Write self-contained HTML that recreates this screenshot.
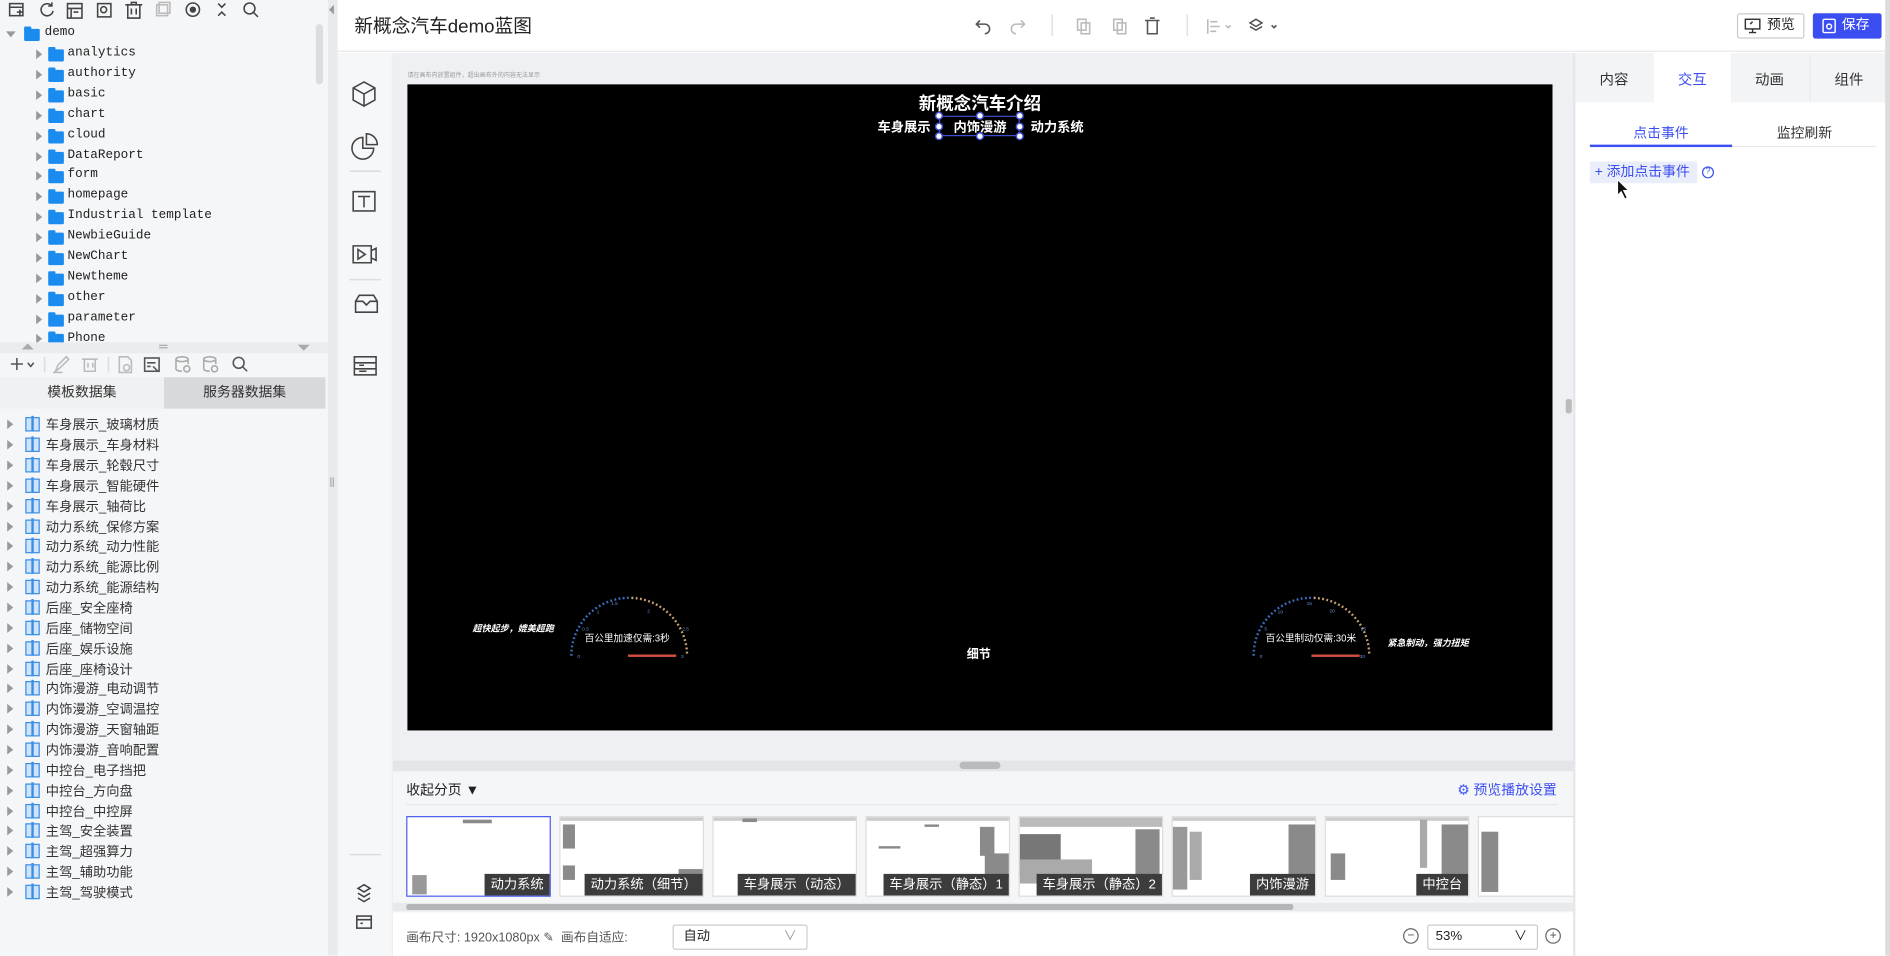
<!DOCTYPE html>
<html><head><meta charset="utf-8"><style>
*{margin:0;padding:0;box-sizing:border-box}
html,body{width:1890px;height:956px;overflow:hidden;background:#fff}
#w{position:absolute;left:0;top:0;width:1568px;height:793px;overflow:hidden;transform:scale(1.20536);transform-origin:0 0;font-family:"Liberation Sans","Noto Sans CJK SC",sans-serif;color:#333}
.a{position:absolute}
.tr{position:absolute;font-family:"Liberation Mono","Noto Sans CJK SC",monospace;font-size:10.5px;color:#222;white-space:nowrap}
.fold{position:absolute;width:13px;height:10px;background:#1a8cf0;border-radius:1px}
.fold:before{content:"";position:absolute;left:0;top:-2px;width:6px;height:3px;background:#1a8cf0;border-radius:1px 1px 0 0}
.tri{position:absolute;width:0;height:0;border-top:4px solid transparent;border-bottom:4px solid transparent;border-left:5px solid #999}
.li{position:absolute;font-size:11px;color:#333;white-space:nowrap}
.ds{position:absolute;width:12px;height:12px;border:1.5px solid #3a8ee6;background:#cfe3fa}
.ds:after{content:"";position:absolute;left:3.5px;top:-2px;width:2px;height:13px;background:#3a8ee6}
.th{position:absolute;top:0;width:120px;height:67px;background:#fff;border:1px solid #ddd;overflow:hidden}
.th .lb{position:absolute;right:0;bottom:0;height:18px;background:#3c3c3c;color:#fff;font-size:11px;line-height:18px;padding:0 5px;white-space:nowrap}
.g{position:absolute;background:#8a8a8a}
</style></head><body><div id="w">

<div class="a" style="left:0;top:0;width:272px;height:793px;background:#f5f6f8"></div>
<div class="a" style="left:272px;top:0;width:8px;height:793px;background:#e9eaec"></div>
<div class="a" style="left:273px;top:4px;width:0;height:0;border-top:4px solid transparent;border-bottom:4px solid transparent;border-right:4px solid #999"></div>
<svg class="a" style="left:0;top:0" width="220" height="18" stroke="#444" fill="none" stroke-width="1.3">
<rect x="8" y="3" width="11" height="10"/><path d="M8 6h11M14 10h5M16.5 8v5"/>
<path d="M43 5a5 5 0 1 0 1 4M43 2v3h-3"/>
<rect x="56" y="3" width="12" height="12"/><path d="M56 7h12M59 7v8M61 10h4"/>
<rect x="81" y="3" width="11" height="11"/><circle cx="86" cy="8" r="2.5"/>
<path d="M104 4h14M106 4v11h10V4M109 7v5M113 7v5M109 4V2h4v2"/>
<rect x="130" y="4" width="9" height="9" stroke="#bbb"/><rect x="132" y="2" width="9" height="9" stroke="#bbb"/>
<circle cx="160" cy="8" r="5.5"/><circle cx="160" cy="8" r="2" fill="#444"/>
<path d="M181 3l3 3 3-3M181 13l3-3 3 3"/>
<circle cx="207" cy="7" r="4.5"/><path d="M210 10l4 4"/>
</svg>
<div class="a" style="left:262px;top:20px;width:6px;height:50px;background:#dcdde0;border-radius:3px"></div>
<div class="a" style="left:5px;top:26px;width:0;height:0;border-left:4px solid transparent;border-right:4px solid transparent;border-top:5px solid #999"></div>
<div class="fold" style="left:20px;top:24px"></div><div class="tr" style="left:37px;top:21px">demo</div>
<div class="tri" style="left:30px;top:41px"></div><div class="fold" style="left:40px;top:41px"></div><div class="tr" style="left:56px;top:38px">analytics</div>
<div class="tri" style="left:30px;top:58px"></div><div class="fold" style="left:40px;top:58px"></div><div class="tr" style="left:56px;top:55px">authority</div>
<div class="tri" style="left:30px;top:75px"></div><div class="fold" style="left:40px;top:75px"></div><div class="tr" style="left:56px;top:72px">basic</div>
<div class="tri" style="left:30px;top:92px"></div><div class="fold" style="left:40px;top:92px"></div><div class="tr" style="left:56px;top:89px">chart</div>
<div class="tri" style="left:30px;top:109px"></div><div class="fold" style="left:40px;top:109px"></div><div class="tr" style="left:56px;top:106px">cloud</div>
<div class="tri" style="left:30px;top:126px"></div><div class="fold" style="left:40px;top:126px"></div><div class="tr" style="left:56px;top:123px">DataReport</div>
<div class="tri" style="left:30px;top:142px"></div><div class="fold" style="left:40px;top:142px"></div><div class="tr" style="left:56px;top:139px">form</div>
<div class="tri" style="left:30px;top:159px"></div><div class="fold" style="left:40px;top:159px"></div><div class="tr" style="left:56px;top:156px">homepage</div>
<div class="tri" style="left:30px;top:176px"></div><div class="fold" style="left:40px;top:176px"></div><div class="tr" style="left:56px;top:173px">Industrial template</div>
<div class="tri" style="left:30px;top:193px"></div><div class="fold" style="left:40px;top:193px"></div><div class="tr" style="left:56px;top:190px">NewbieGuide</div>
<div class="tri" style="left:30px;top:210px"></div><div class="fold" style="left:40px;top:210px"></div><div class="tr" style="left:56px;top:207px">NewChart</div>
<div class="tri" style="left:30px;top:227px"></div><div class="fold" style="left:40px;top:227px"></div><div class="tr" style="left:56px;top:224px">Newtheme</div>
<div class="tri" style="left:30px;top:244px"></div><div class="fold" style="left:40px;top:244px"></div><div class="tr" style="left:56px;top:241px">other</div>
<div class="tri" style="left:30px;top:261px"></div><div class="fold" style="left:40px;top:261px"></div><div class="tr" style="left:56px;top:258px">parameter</div>
<div class="tri" style="left:30px;top:277px"></div><div class="fold" style="left:40px;top:277px"></div><div class="tr" style="left:56px;top:275px">Phone</div>
<div class="a" style="left:0;top:284px;width:272px;height:9px;background:#ebecee"></div>
<div class="a" style="left:18px;top:285px;width:0;height:0;border-left:5px solid transparent;border-right:5px solid transparent;border-bottom:5px solid #aaa"></div>
<div class="a" style="left:132px;top:286px;width:7px;height:3px;border-top:1px solid #aaa;border-bottom:1px solid #aaa"></div>
<div class="a" style="left:247px;top:286px;width:0;height:0;border-left:5px solid transparent;border-right:5px solid transparent;border-top:5px solid #aaa"></div>
<svg class="a" style="left:0;top:293px" width="220" height="20" stroke="#555" fill="none" stroke-width="1.3">
<path d="M9 9h10M14 4v10M23 8l2.5 3 2.5-3"/>
<path d="M37 3v13" stroke="#ddd"/>
<path d="M46 15l2-5 7-7 2 2-7 7zM44 16h8" stroke="#bbb"/>
<path d="M68 5h13M70 5v10h9V5M73 8v4M77 8v4" stroke="#bbb"/>
<path d="M90 3v13" stroke="#ddd"/>
<path d="M99 3h7l3 3v10h-10z" stroke="#bbb"/><circle cx="105" cy="12" r="2.5" stroke="#bbb"/>
<rect x="120" y="4" width="12" height="11"/><path d="M122 8h7M122 11h3M127 11l4 4"/>
<ellipse cx="151" cy="5" rx="5" ry="2" stroke="#aaa"/><path d="M146 5v8c0 1 2 2 5 2M156 5v4" stroke="#aaa"/><circle cx="155" cy="13" r="2.5" stroke="#aaa"/>
<ellipse cx="174" cy="5" rx="5" ry="2" stroke="#aaa"/><path d="M169 5v8c0 1 2 2 5 2M179 5v4" stroke="#aaa"/><circle cx="178" cy="13" r="2.5" stroke="#aaa"/>
<circle cx="198" cy="8" r="4.5"/><path d="M201 11l4 4"/>
</svg>
<div class="a" style="left:0;top:313px;width:270px;height:26px;background:#f0f1f3"></div>
<div class="a" style="left:136px;top:313px;width:134px;height:26px;background:#d8d9dc"></div>
<div class="a" style="left:0;top:313px;width:136px;height:26px;line-height:26px;text-align:center;font-size:11.5px;color:#333">模板数据集</div>
<div class="a" style="left:136px;top:313px;width:134px;height:26px;line-height:26px;text-align:center;font-size:11.5px;color:#333">服务器数据集</div>
<div class="tri" style="left:6px;top:348px"></div><div class="ds" style="left:21px;top:346px"></div><div class="li" style="left:38px;top:344px">车身展示_玻璃材质</div>
<div class="tri" style="left:6px;top:365px"></div><div class="ds" style="left:21px;top:363px"></div><div class="li" style="left:38px;top:361px">车身展示_车身材料</div>
<div class="tri" style="left:6px;top:382px"></div><div class="ds" style="left:21px;top:380px"></div><div class="li" style="left:38px;top:378px">车身展示_轮毂尺寸</div>
<div class="tri" style="left:6px;top:399px"></div><div class="ds" style="left:21px;top:397px"></div><div class="li" style="left:38px;top:395px">车身展示_智能硬件</div>
<div class="tri" style="left:6px;top:416px"></div><div class="ds" style="left:21px;top:414px"></div><div class="li" style="left:38px;top:412px">车身展示_轴荷比</div>
<div class="tri" style="left:6px;top:433px"></div><div class="ds" style="left:21px;top:431px"></div><div class="li" style="left:38px;top:429px">动力系统_保修方案</div>
<div class="tri" style="left:6px;top:449px"></div><div class="ds" style="left:21px;top:447px"></div><div class="li" style="left:38px;top:445px">动力系统_动力性能</div>
<div class="tri" style="left:6px;top:466px"></div><div class="ds" style="left:21px;top:464px"></div><div class="li" style="left:38px;top:462px">动力系统_能源比例</div>
<div class="tri" style="left:6px;top:483px"></div><div class="ds" style="left:21px;top:481px"></div><div class="li" style="left:38px;top:479px">动力系统_能源结构</div>
<div class="tri" style="left:6px;top:500px"></div><div class="ds" style="left:21px;top:498px"></div><div class="li" style="left:38px;top:496px">后座_安全座椅</div>
<div class="tri" style="left:6px;top:517px"></div><div class="ds" style="left:21px;top:515px"></div><div class="li" style="left:38px;top:513px">后座_储物空间</div>
<div class="tri" style="left:6px;top:534px"></div><div class="ds" style="left:21px;top:532px"></div><div class="li" style="left:38px;top:530px">后座_娱乐设施</div>
<div class="tri" style="left:6px;top:551px"></div><div class="ds" style="left:21px;top:549px"></div><div class="li" style="left:38px;top:547px">后座_座椅设计</div>
<div class="tri" style="left:6px;top:567px"></div><div class="ds" style="left:21px;top:565px"></div><div class="li" style="left:38px;top:563px">内饰漫游_电动调节</div>
<div class="tri" style="left:6px;top:584px"></div><div class="ds" style="left:21px;top:582px"></div><div class="li" style="left:38px;top:580px">内饰漫游_空调温控</div>
<div class="tri" style="left:6px;top:601px"></div><div class="ds" style="left:21px;top:599px"></div><div class="li" style="left:38px;top:597px">内饰漫游_天窗轴距</div>
<div class="tri" style="left:6px;top:618px"></div><div class="ds" style="left:21px;top:616px"></div><div class="li" style="left:38px;top:614px">内饰漫游_音响配置</div>
<div class="tri" style="left:6px;top:635px"></div><div class="ds" style="left:21px;top:633px"></div><div class="li" style="left:38px;top:631px">中控台_电子挡把</div>
<div class="tri" style="left:6px;top:652px"></div><div class="ds" style="left:21px;top:650px"></div><div class="li" style="left:38px;top:648px">中控台_方向盘</div>
<div class="tri" style="left:6px;top:669px"></div><div class="ds" style="left:21px;top:667px"></div><div class="li" style="left:38px;top:665px">中控台_中控屏</div>
<div class="tri" style="left:6px;top:685px"></div><div class="ds" style="left:21px;top:683px"></div><div class="li" style="left:38px;top:681px">主驾_安全装置</div>
<div class="tri" style="left:6px;top:702px"></div><div class="ds" style="left:21px;top:700px"></div><div class="li" style="left:38px;top:698px">主驾_超强算力</div>
<div class="tri" style="left:6px;top:719px"></div><div class="ds" style="left:21px;top:717px"></div><div class="li" style="left:38px;top:715px">主驾_辅助功能</div>
<div class="tri" style="left:6px;top:736px"></div><div class="ds" style="left:21px;top:734px"></div><div class="li" style="left:38px;top:732px">主驾_驾驶模式</div>
<div class="a" style="left:274px;top:396px;width:3px;height:8px;border-left:1px solid #aaa;border-right:1px solid #aaa"></div>

<div class="a" style="left:280px;top:0;width:1288px;height:43px;background:#fff;border-bottom:1px solid #e6e7ea"></div>
<div class="a" style="left:294px;top:10px;font-size:15.5px;color:#222">新概念汽车demo蓝图</div>
<svg class="a" style="left:800px;top:8px" width="270" height="26" fill="none" stroke-width="1.3">
<path d="M13 9l-3 3 3 3M10 12h7a4 4 0 0 1 0 8" stroke="#555"/>
<path d="M47 9l3 3-3 3M50 12h-7a4 4 0 0 0 0 8" stroke="#bbb"/>
<path d="M73 4v18" stroke="#e2e2e2"/>
<rect x="94" y="8" width="7" height="9" stroke="#bbb"/><rect x="97" y="11" width="7" height="9" stroke="#bbb"/>
<rect x="124" y="8" width="7" height="9" stroke="#bbb"/><rect x="127" y="11" width="7" height="9" stroke="#bbb"/>
<path d="M150 9h12M152 9v11h8V9M154 7h4" stroke="#555"/>
<path d="M185 4v18" stroke="#e2e2e2"/>
<path d="M202 8v12M204 10h6M204 14h8M204 18h5M217 13l2 2 2-2" stroke="#bbb"/>
<path d="M242 8l5 3-5 3-5-3zM237 14l5 3 5-3M255 13l2 2 2-2" stroke="#555"/>
</svg>
<div class="a" style="left:1441px;top:11px;width:56px;height:21px;border:1px solid #ccc;border-radius:2px;background:#fff;font-size:11.5px;line-height:19px;padding-left:24px;color:#222">预览</div>
<svg class="a" style="left:1447px;top:15px" width="14" height="13" fill="none" stroke="#333" stroke-width="1.2"><rect x="1" y="1" width="12" height="8"/><path d="M7 9v3M4 12h6M5 5l2-2"/></svg>
<div class="a" style="left:1504px;top:11px;width:57px;height:21px;background:#3b4ef2;border-radius:2px;font-size:11.5px;line-height:21px;padding-left:24px;color:#fff">保存</div>
<svg class="a" style="left:1511px;top:15px" width="13" height="13" fill="none" stroke="#fff" stroke-width="1.2"><rect x="1.5" y="1" width="10" height="11" rx="1"/><circle cx="6.5" cy="7" r="2"/></svg>

<div class="a" style="left:280px;top:44px;width:46px;height:749px;background:#f6f7f9;border-right:1px solid #eceef0"></div>
<svg class="a" style="left:280px;top:44px" width="46" height="740" fill="none" stroke="#444" stroke-width="1.3">
<path d="M22 24l9 5v10l-9 5-9-5V29zM13 29l9 5 9-5M22 34v10"/>
<path d="M21 70a9 9 0 1 0 9 9h-9zM24 67v9h9a9 9 0 0 0-9-9z"/>
<path d="M10 98h26" stroke="#ddd"/>
<rect x="13" y="115" width="18" height="16"/><path d="M17 119h10M22 119v9"/>
<path d="M13 160h15v14H13zM17 163v8l6-4zM28 164l4-2v10l-4-2"/>
<path d="M10 188h26" stroke="#ddd"/>
<path d="M15 206l3-5h12l3 5v9H15zM15 206h6l3 3 3-3h6"/>
<rect x="14" y="252" width="18" height="15"/><path d="M14 257h18M14 262h18M18 259h4M18 264h6"/>
<path d="M10 665h26" stroke="#ddd"/>
<path d="M22 690l5 3-5 3-5-3zM17 697l5 3 5-3M17 701l5 3 5-3"/>
<rect x="16" y="716" width="12" height="10"/><path d="M16 719h12M19 722h2"/>
</svg>

<div class="a" style="left:326px;top:44px;width:979px;height:596px;background:#eef0f3"></div>
<div class="a" style="left:338px;top:59px;font-size:5px;color:#999;white-space:nowrap">请在画布内放置组件，超出画布外的内容无法显示</div>
<div class="a" style="left:338px;top:70px;width:950px;height:536px;background:#000"></div>
<div class="a" style="left:713px;top:75px;width:200px;text-align:center;font-size:14.5px;font-weight:bold;color:#fff">新概念汽车介绍</div>
<div class="a" style="left:728px;top:97px;font-size:11px;font-weight:bold;color:#fff">车身展示</div>
<div class="a" style="left:791px;top:97px;font-size:11px;font-weight:bold;color:#fff">内饰漫游</div>
<div class="a" style="left:855px;top:97px;font-size:11px;font-weight:bold;color:#fff">动力系统</div>
<div class="a" style="left:779px;top:96px;width:67px;height:17px;border:1px solid #3d4fd0"></div>
<svg class="a" style="left:774px;top:92px" width="78" height="26"><g fill="#fff" stroke="#3d4fd0" stroke-width="1.2"><circle cx="5" cy="4" r="2.8"/><circle cx="39" cy="4" r="2.8"/><circle cx="72" cy="4" r="2.8"/><circle cx="5" cy="13" r="2.8"/><circle cx="72" cy="13" r="2.8"/><circle cx="5" cy="21" r="2.8"/><circle cx="39" cy="21" r="2.8"/><circle cx="72" cy="21" r="2.8"/></g></svg>
<svg class="a" style="left:338px;top:480px" width="950" height="90">
<path d="M136 64 A48 48 0 0 1 186 16" stroke="#3a6fc0" stroke-width="2" fill="none" stroke-dasharray="1.5 2"/>
<path d="M186 16 A48 48 0 0 1 232 64" stroke="#c9a070" stroke-width="2" fill="none" stroke-dasharray="1.5 2"/>
<rect x="183" y="63" width="40" height="2" fill="#d05040"/>
<path d="M702 64 A48 48 0 0 1 752 16" stroke="#3a6fc0" stroke-width="2" fill="none" stroke-dasharray="1.5 2"/>
<path d="M752 16 A48 48 0 0 1 798 64" stroke="#c9a070" stroke-width="2" fill="none" stroke-dasharray="1.5 2"/>
<rect x="750" y="63" width="40" height="2" fill="#d05040"/>
<g font-size="4" fill="#6a8fd0" font-family="Liberation Sans"><text x="141" y="66">0</text><text x="145" y="43">0.5</text><text x="157" y="29">1</text><text x="169" y="22">1.5</text><text x="199" y="28">2</text><text x="228" y="43">2.5</text><text x="227" y="66">3</text>
<text x="707" y="66">0</text><text x="711" y="43">5</text><text x="722" y="29">10</text><text x="746" y="22">15</text><text x="765" y="28">20</text><text x="791" y="43">25</text><text x="790" y="66">30</text></g>
</svg>
<div class="a" style="left:392px;top:516px;font-size:7.5px;font-style:italic;font-weight:bold;color:#fff;white-space:nowrap">超快起步，媲美超跑</div>
<div class="a" style="left:485px;top:524px;font-size:8px;color:#fff;white-space:nowrap">百公里加速仅需:3秒</div>
<div class="a" style="left:802px;top:534px;font-size:10px;font-weight:bold;color:#fff">细节</div>
<div class="a" style="left:1050px;top:524px;font-size:8px;color:#fff;white-space:nowrap">百公里制动仅需:30米</div>
<div class="a" style="left:1151px;top:528px;font-size:7.5px;font-style:italic;font-weight:bold;color:#fff;white-space:nowrap">紧急制动，强力扭矩</div>
<div class="a" style="left:1299px;top:331px;width:5px;height:12px;background:#bbb;border-radius:2px"></div>
<div class="a" style="left:326px;top:631px;width:979px;height:9px;background:#e3e5e8"></div>
<div class="a" style="left:796px;top:632px;width:34px;height:6px;background:#b8babd;border-radius:3px"></div>

<div class="a" style="left:326px;top:640px;width:979px;height:118px;background:#f5f6f8"></div>
<div class="a" style="left:337px;top:647px;font-size:11.5px;color:#222">收起分页 ▼</div>
<div class="a" style="left:1209px;top:647px;font-size:11.5px;color:#3b4ef2;white-space:nowrap">⚙ 预览播放设置</div>
<div class="a" style="left:337px;top:667px;width:955px;height:1px;background:#e6e7ea"></div>
<div class="a" style="left:326px;top:677px;width:979px;height:68px;overflow:hidden">
<div class="th" style="left:11px;border-color:#4a5cf0"><div class="g" style="left:46px;top:2px;width:24px;height:3px"></div><div class="g" style="left:4px;top:48px;width:12px;height:16px;background:#999"></div><div class="lb">动力系统</div></div>
<div class="th" style="left:138px"><div class="g" style="left:0;top:0;width:120px;height:3px;background:#ccc"></div><div class="g" style="left:2px;top:6px;width:10px;height:20px"></div><div class="g" style="left:2px;top:40px;width:10px;height:12px"></div><div class="g" style="left:98px;top:43px;width:20px;height:10px"></div><div class="lb">动力系统（细节）</div></div>
<div class="th" style="left:265px"><div class="g" style="left:0;top:0;width:120px;height:3px;background:#ccc"></div><div class="g" style="left:24px;top:1px;width:12px;height:3px"></div><div class="lb">车身展示（动态）</div></div>
<div class="th" style="left:392px"><div class="g" style="left:0;top:0;width:120px;height:3px;background:#ccc"></div><div class="g" style="left:48px;top:6px;width:12px;height:2px"></div><div class="g" style="left:94px;top:8px;width:12px;height:24px"></div><div class="g" style="left:98px;top:30px;width:20px;height:20px"></div><div class="g" style="left:10px;top:24px;width:18px;height:2px"></div><div class="lb">车身展示（静态）1</div></div>
<div class="th" style="left:519px"><div class="g" style="left:0;top:0;width:120px;height:8px;background:#bbb"></div><div class="g" style="left:0;top:14px;width:34px;height:36px;background:#777"></div><div class="g" style="left:0;top:35px;width:60px;height:20px;background:#aaa"></div><div class="g" style="left:96px;top:10px;width:20px;height:48px"></div><div class="lb">车身展示（静态）2</div></div>
<div class="th" style="left:646px"><div class="g" style="left:0;top:0;width:120px;height:3px;background:#ccc"></div><div class="g" style="left:0;top:8px;width:12px;height:52px;background:#999"></div><div class="g" style="left:14px;top:12px;width:10px;height:40px;background:#aaa"></div><div class="g" style="left:96px;top:6px;width:22px;height:48px"></div><div class="lb">内饰漫游</div></div>
<div class="th" style="left:773px"><div class="g" style="left:0;top:0;width:120px;height:3px;background:#ccc"></div><div class="g" style="left:4px;top:30px;width:12px;height:22px"></div><div class="g" style="left:96px;top:6px;width:22px;height:48px"></div><div class="g" style="left:78px;top:2px;width:6px;height:40px;background:#aaa"></div><div class="lb">中控台</div></div>
<div class="th" style="left:900px"><div class="g" style="left:2px;top:12px;width:14px;height:50px"></div></div>
</div>
<div class="a" style="left:326px;top:749px;width:979px;height:7px;background:#e8e9eb"></div>
<div class="a" style="left:337px;top:750px;width:736px;height:5px;background:#b5b6b8;border-radius:2px"></div>

<div class="a" style="left:326px;top:757px;width:979px;height:36px;background:#fff"></div>
<div class="a" style="left:337px;top:770px;font-size:10.5px;color:#555;white-space:nowrap">画布尺寸: 1920x1080px ✎ &nbsp;画布自适应:</div>
<div class="a" style="left:558px;top:767px;width:112px;height:21px;border:1px solid #ccc;border-radius:2px;font-size:11px;line-height:19px;padding-left:8px;color:#222">自动<span style="position:absolute;right:8px;color:#999">∨</span></div>
<div class="a" style="left:1164px;top:770px;width:13px;height:13px;border:1px solid #666;border-radius:50%;font-size:10px;line-height:11px;text-align:center;color:#555">−</div>
<div class="a" style="left:1184px;top:767px;width:92px;height:21px;border:1px solid #ccc;border-radius:2px;font-size:11px;line-height:19px;padding-left:6px;color:#222">53%<span style="position:absolute;right:8px;color:#222">∨</span></div>
<div class="a" style="left:1282px;top:770px;width:13px;height:13px;border:1px solid #666;border-radius:50%;font-size:10px;line-height:11px;text-align:center;color:#555">+</div>

<div class="a" style="left:1305px;top:44px;width:263px;height:749px;background:#fff;border-left:2px solid #e6e7ea"></div>
<div class="a" style="left:1307px;top:44px;width:258px;height:41px;background:#f3f4f6"></div>
<div class="a" style="left:1372px;top:44px;width:64px;height:41px;background:#fff"></div>
<div class="a" style="left:1501px;top:46px;width:1px;height:38px;background:#e8e9eb"></div>
<div class="a" style="left:1327px;top:57px;font-size:12px;color:#333">内容</div>
<div class="a" style="left:1392px;top:57px;font-size:12px;color:#3b4ef2">交互</div>
<div class="a" style="left:1456px;top:57px;font-size:12px;color:#333">动画</div>
<div class="a" style="left:1522px;top:57px;font-size:12px;color:#333">组件</div>
<div class="a" style="left:1355px;top:102px;font-size:11.5px;color:#3b4ef2">点击事件</div>
<div class="a" style="left:1474px;top:102px;font-size:11.5px;color:#333">监控刷新</div>
<div class="a" style="left:1319px;top:121px;width:237px;height:1px;background:#e6e7ea"></div>
<div class="a" style="left:1319px;top:120px;width:118px;height:2px;background:#3b4ef2"></div>
<div class="a" style="left:1319px;top:134px;width:89px;height:18px;background:#e9eefa;font-size:11.5px;line-height:18px;color:#3b4ef2;padding-left:4px;white-space:nowrap">+ 添加点击事件</div>
<div class="a" style="left:1412px;top:138px;width:10px;height:10px;border:1px solid #3b4ef2;border-radius:50%;font-size:7px;line-height:8px;text-align:center;color:#3b4ef2">?</div>
<svg class="a" style="left:1341px;top:148px" width="12" height="18"><path d="M1 1v13l3-3 3 6 2-1-3-6h4z" fill="#111" stroke="#fff" stroke-width="0.8"/></svg>
<div class="a" style="left:1564px;top:0;width:4px;height:793px;background:#ddd"></div>
</div></body></html>
